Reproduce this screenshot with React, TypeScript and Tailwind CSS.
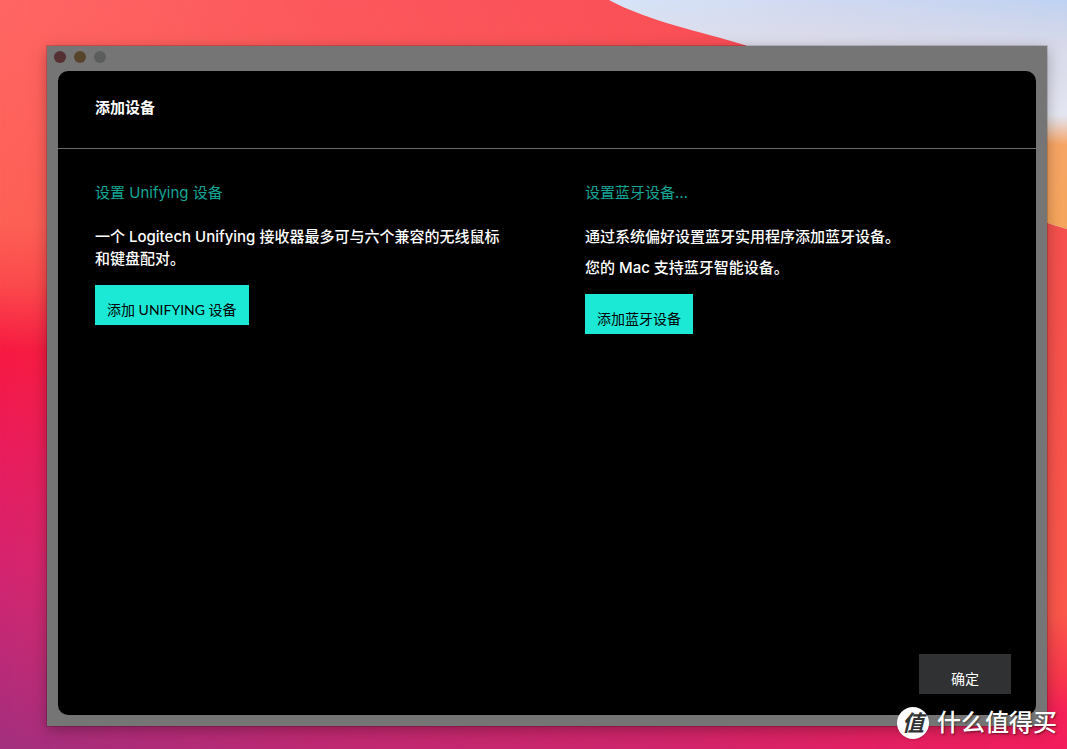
import type { ReactNode } from 'react';

const sections = [
  {
    id: 'unifying',
    title: '设置 Unifying 设备',
    lines: ['一个 Logitech Unifying 接收器最多可与六个兼容的无线鼠标和键盘配对。'],
    action: '添加 UNIFYING 设备',
  },
  {
    id: 'bluetooth',
    title: '设置蓝牙设备…',
    lines: ['通过系统偏好设置蓝牙实用程序添加蓝牙设备。', '您的 Mac 支持蓝牙智能设备。'],
    action: '添加蓝牙设备',
  },
];

function Wallpaper() {
  return (
    <svg
      className="absolute inset-0 h-full w-full"
      viewBox="0 0 1067 749"
      preserveAspectRatio="none"
      aria-hidden="true"
    >
      <defs>
        <linearGradient id="left" x1="0" y1="0" x2="0" y2="1">
          <stop offset="0" stopColor="#ff6664" />
          <stop offset="0.3" stopColor="#fd6055" />
          <stop offset="0.38" stopColor="#fb4a4c" />
          <stop offset="0.47" stopColor="#f61942" />
          <stop offset="0.6" stopColor="#e91c5c" />
          <stop offset="0.75" stopColor="#d6246f" />
          <stop offset="1" stopColor="#a3307f" />
        </linearGradient>
        <linearGradient id="right" x1="0" y1="0" x2="0" y2="1">
          <stop offset="0" stopColor="#f63c4e" />
          <stop offset="0.3" stopColor="#f5504e" />
          <stop offset="0.82" stopColor="#fa584a" />
          <stop offset="0.91" stopColor="#f8344c" />
          <stop offset="0.95" stopColor="#f52056" />
          <stop offset="1" stopColor="#f31c5c" />
        </linearGradient>
        <linearGradient id="fade" x1="0" y1="0" x2="1" y2="0">
          <stop offset="0" stopColor="#000" />
          <stop offset="0.3" stopColor="#555" />
          <stop offset="0.6" stopColor="#888" />
          <stop offset="1" stopColor="#fff" />
        </linearGradient>
        <linearGradient id="sky" x1="0" y1="0" x2="1" y2="0">
          <stop offset="0" stopColor="#d6e4f8" />
          <stop offset="0.45" stopColor="#d0d9f2" />
          <stop offset="1" stopColor="#bfd2f2" />
        </linearGradient>
        <linearGradient id="glow" x1="0" y1="0" x2="0" y2="1">
          <stop offset="0" stopColor="#e5dbdd" stopOpacity="0" />
          <stop offset="0.2" stopColor="#e2dce6" stopOpacity="0.7" />
          <stop offset="0.5" stopColor="#e4e6f2" />
          <stop offset="0.54" stopColor="#e8d5cf" />
          <stop offset="0.63" stopColor="#f7a565" />
          <stop offset="1" stopColor="#f6a65c" />
        </linearGradient>
        <mask id="rightMask">
          <rect width="1067" height="749" fill="url(#fade)" />
        </mask>
      </defs>
      <rect width="1067" height="749" fill="url(#left)" />
      <rect width="1067" height="749" fill="url(#right)" mask="url(#rightMask)" />
      <path d="M609 0C650 22 700 31 745 45C850 100 960 200 1067 229V0Z" fill="url(#sky)" />
      <path d="M609 0C650 22 700 31 745 45C850 100 960 200 1067 229V0Z" fill="url(#glow)" />
    </svg>
  );
}

function ActionButton({ children }: { children: ReactNode }) {
  return (
    <button
      type="button"
      className="h-10 self-start bg-[#1be9d6] px-3 pt-2.5 font-[Lato,'Noto_Sans_CJK_SC',sans-serif] text-sm leading-5 text-black"
    >
      {children}
    </button>
  );
}

function Watermark() {
  return (
    <div className="absolute right-2.5 bottom-2.5 flex items-center gap-2 text-white">
      <span className="flex h-8 w-8 items-center justify-center rounded-full bg-white text-[22px] leading-8 font-bold text-[#333] italic shadow">
        值
      </span>
      <span className="text-2xl leading-8 font-medium [text-shadow:1px_1px_2px_rgba(0,0,0,0.5)]">
        什么值得买
      </span>
    </div>
  );
}

export default function App() {
  return (
    <div className="relative flex min-h-screen flex-col overflow-hidden pt-[46px] pr-5 pb-[23px] pl-[47px] font-[Inter,'Noto_Sans_CJK_SC',sans-serif]">
      <Wallpaper />
      {/* WINDOW */}
      <div className="relative flex flex-1 flex-col bg-[#757575] px-[11px] pb-[11px] shadow-[0_4px_14px_rgba(0,0,0,0.3),0_0_0_1px_rgba(0,0,0,0.15)]">
        <div className="flex h-[25px] items-center gap-2 pb-[3px]">
          <span className="-ml-1 h-3 w-3 rounded-full bg-[#553033]" />
          <span className="h-3 w-3 rounded-full bg-[#56442b]" />
          <span className="h-3 w-3 rounded-full bg-[#5b5d5d]" />
        </div>
        <main className="flex flex-1 flex-col rounded-[10px] bg-black text-[15px] text-white">
          <header className="h-[78px] border-b border-[#6a6a6a] px-[37px] pt-[26px]">
            <h1 className="leading-[22px] font-bold">添加设备</h1>
          </header>
          {/* DEVICE TYPES */}
          <div className="grid grid-cols-2 pt-[33px]">
            {sections.map((section) => (
              <section
                key={section.id}
                className="flex flex-col pr-10 pl-[37px] last:pl-[38px]"
              >
                <h2 className="mb-[22px] leading-[22px] text-[#14a694]">{section.title}</h2>
                <div className="mb-[15px] flex flex-col gap-[9px] leading-[22px] font-medium">
                  {section.lines.map((line) => (
                    <p key={line}>{line}</p>
                  ))}
                </div>
                <ActionButton>{section.action}</ActionButton>
              </section>
            ))}
          </div>
          <footer className="mt-auto flex justify-end px-[25px] pb-[21px]">
            <button
              type="button"
              className="h-10 w-[92px] bg-[#303133] pt-2.5 text-sm leading-5 text-white"
            >
              确定
            </button>
          </footer>
        </main>
      </div>
      <Watermark />
    </div>
  );
}
